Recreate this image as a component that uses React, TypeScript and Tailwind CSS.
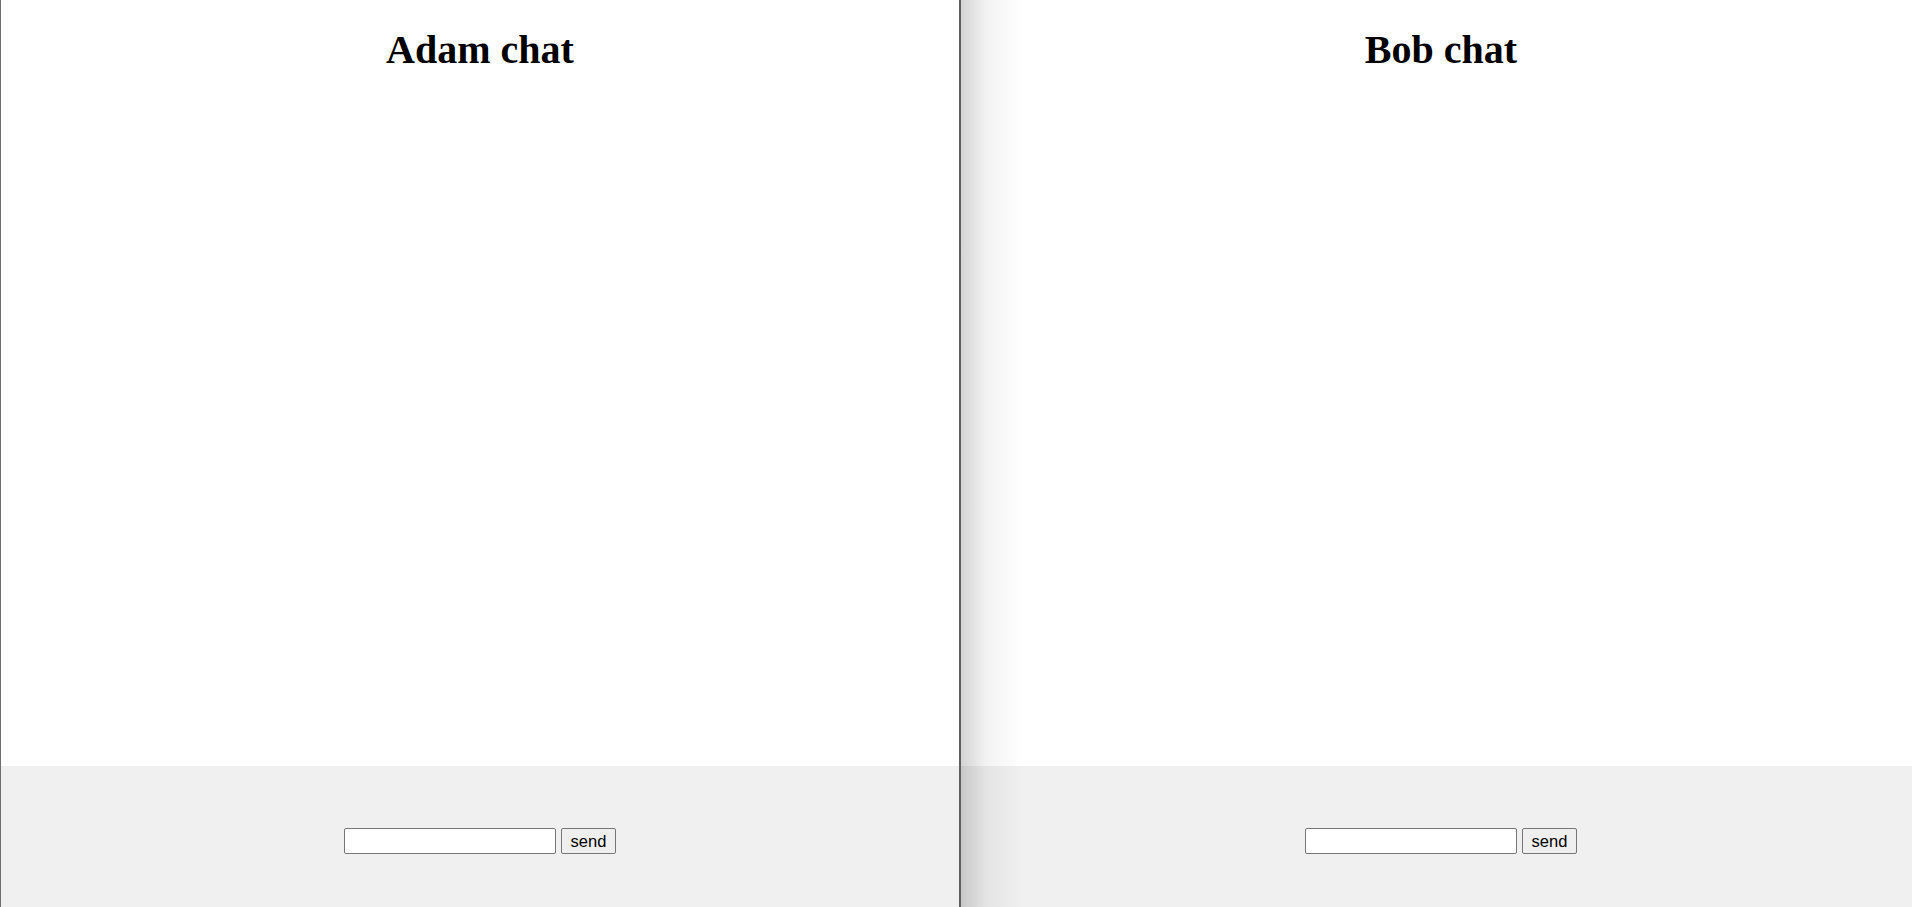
import { useState } from 'react';

interface ChatProps {
  name: string;
  first?: boolean;
}

function ChatPanel({ name, first }: ChatProps) {
  const [text, setText] = useState('');

  return (
    <div
      className={`relative flex flex-col h-full shrink-0 bg-white ${
        first
          ? 'w-[961px] border-l border-l-[#6e6e6e] border-r-2 border-r-[#5e5e5e]'
          : 'w-[960px]'
      }`}
    >
      {!first && (
        <div className="pointer-events-none absolute inset-y-0 left-0 z-10 w-[62px] bg-linear-to-r from-black/[0.17] via-black/[0.05] via-40% to-transparent" />
      )}
      <h1 className="mt-[27px] text-center text-[40px] leading-[46px] font-bold text-black font-['Liberation_Serif',serif]">
        {name} chat
      </h1>
      <div className="flex-1" />
      <div className="h-[141px] bg-[#f0f0f0] pt-[62px] flex justify-center items-start gap-[5px] font-['Liberation_Sans',Arial,sans-serif]">
        <input
          value={text}
          onChange={(e) => setText(e.target.value)}
          className="w-[212px] h-[26px] bg-white border border-[#767676] rounded-[2px] px-1 text-[16px] outline-none"
        />
        <button
          onClick={() => setText('')}
          className="w-[55px] h-[26px] bg-[#efefef] border border-[#767676] rounded-[2px] text-[16.5px] leading-none text-black"
        >
          send
        </button>
      </div>
    </div>
  );
}

export default function App() {
  return (
    <div className="flex w-full h-[907px] overflow-hidden bg-white">
      <ChatPanel name="Adam" first />
      <ChatPanel name="Bob" />
    </div>
  );
}
